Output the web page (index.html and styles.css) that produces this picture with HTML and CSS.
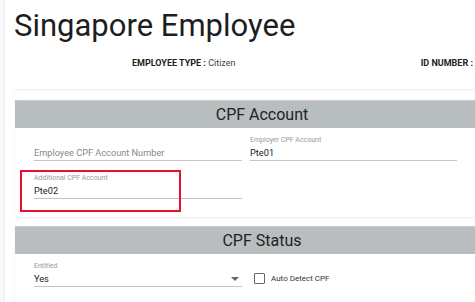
FILE: index.html
```html
<!DOCTYPE html>
<html lang="en">
<head>
  <meta charset="UTF-8">
  <title>Singapore Employee</title>
  <link rel="stylesheet" href="styles.css">
</head>
<body>
  <div class="page">
    <div class="side"></div>
    <main>
      <section class="intro">
        <h1>Singapore Employee</h1>
        <div class="meta">
          <span class="meta-type"><b>EMPLOYEE TYPE :</b> Citizen</span>
          <span class="meta-id"><b>ID NUMBER :</b></span>
        </div>
      </section>

      <section class="card">
        <h2>CPF Account</h2>
        <div class="grid">
          <div class="field">
            <div class="value placeholder">Employee CPF Account Number</div>
          </div>
          <div class="field">
            <label>Employer CPF Account</label>
            <div class="value">Pte01</div>
          </div>
          <div class="field marked">
            <label>Additional CPF Account</label>
            <div class="value">Pte02</div>
          </div>
        </div>
      </section>

      <section class="card">
        <h2>CPF Status</h2>
        <div class="grid">
          <div class="field">
            <label>Entitled</label>
            <div class="value select">Yes <span class="arrow"></span></div>
          </div>
          <div class="check">
            <span class="box"></span>
            <span>Auto Detect CPF</span>
          </div>
        </div>
      </section>
    </main>
  </div>
</body>
</html>
```

FILE: styles.css
```css
* {
  box-sizing: border-box;
  margin: 0;
  padding: 0;
  font-family: 'Roboto', 'Liberation Sans', sans-serif;
}

body {
  background: #fff;
  color: #222;
  overflow: hidden;
  width: 475px;
  height: 302px;
}

.page {
  display: flex;
  width: 520px;
  height: 302px;
  overflow: hidden;
}

.side {
  width: 5px;
  flex: none;
  background: #f8f8f8;
  border-right: 1px solid #ececec;
}

main {
  padding-left: 10px;
  width: 504px;
}

.intro {
  height: 90px;
  padding-top: 7px;
  border-bottom: 1px solid #f0f0f0;
  box-shadow: 0 1px 2px rgba(0, 0, 0, 0.04);
}

h1 {
  font-size: 31px;
  font-weight: 400;
  line-height: 37px;
  color: #1e1e1e;
  margin-left: -1px;
}

.meta {
  margin-top: 14px;
  font-size: 9px;
  color: #444;
  height: 12px;
}

.meta b {
  color: #222;
  font-weight: 700;
}

.meta-type {
  margin-left: 117px;
}

.meta-id {
  margin-left: 183px;
}

.card {
  margin-top: 10px;
  height: 117px;
  box-shadow: 0 1px 3px rgba(0, 0, 0, 0.08);
}

.card + .card {
  margin-top: 9px;
}

.card h2 {
  background: #b8bdbf;
  border-top: 1px solid #c9cdce;
  height: 28px;
  line-height: 27px;
  font-size: 16px;
  font-weight: 400;
  text-align: center;
  color: #222;
}

.grid {
  display: grid;
  grid-template-columns: 208px 207px;
  column-gap: 8px;
  padding: 4px 0 0 19px;
}

.field {
  position: relative;
  height: 29px;
  padding-top: 3px;
  border-bottom: 1px solid #c4c4c4;
  margin-bottom: 9px;
}

.field label {
  display: block;
  font-size: 7px;
  color: #999;
  height: 10px;
  line-height: 10px;
}

.field .value {
  font-size: 9.2px;
  line-height: 14px;
  color: #222;
  margin-top: 1px;
}

.field .placeholder {
  margin-top: 11px;
  color: #888;
}

.marked::before {
  content: "";
  position: absolute;
  left: -14px;
  top: 0;
  width: 157px;
  height: 38px;
  border: 2px solid #e8112d;
}

.select {
  display: flex;
  justify-content: space-between;
  align-items: center;
  padding-right: 3px;
}

.arrow {
  width: 0;
  height: 0;
  border-left: 4px solid transparent;
  border-right: 4px solid transparent;
  border-top: 4px solid #666;
}

.check {
  display: flex;
  align-items: center;
  gap: 6px;
  font-size: 8px;
  color: #333;
  height: 24px;
  margin-top: 8px;
  margin-left: 4px;
}

.box {
  width: 11px;
  height: 11px;
  border: 1px solid #666;
  border-radius: 1px;
}
```
